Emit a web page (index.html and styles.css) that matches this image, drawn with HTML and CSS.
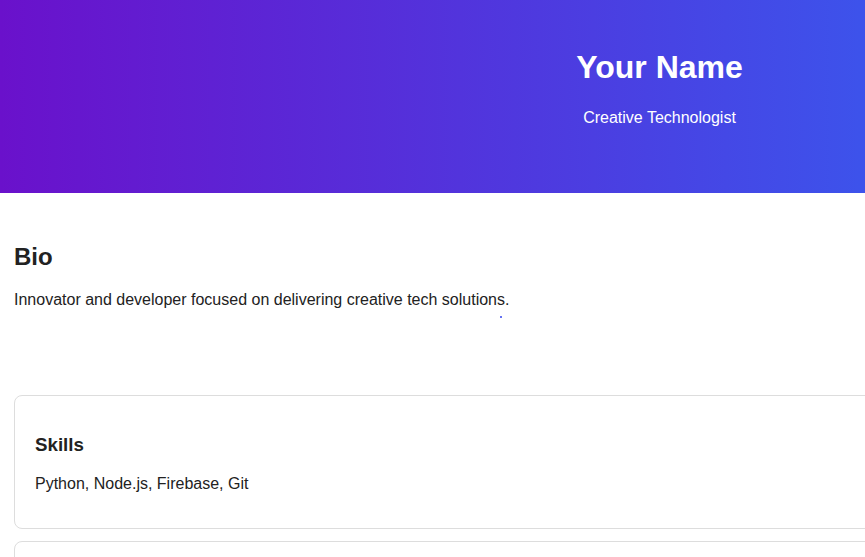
FILE: index.html
```html
<!DOCTYPE html>
<html lang="en">
<head>
<meta charset="utf-8">
<title>Your Name</title>
<link rel="stylesheet" href="styles.css">
</head>
<body>
<div class="page">
  <header class="hero">
    <h1>Your Name</h1>
    <p>Creative Technologist</p>
  </header>
  <main class="content">
    <section class="bio">
      <h2>Bio</h2>
      <p>Innovator and developer focused on delivering creative tech solutions.</p>
      <span class="dot"></span>
    </section>
    <section class="card">
      <h3>Skills</h3>
      <p>Python, Node.js, Firebase, Git</p>
    </section>
    <section class="card card-next"></section>
  </main>
</div>
</body>
</html>
```
FILE: styles.css
```css
html, body {
  margin: 0;
  overflow: hidden;
}
body {
  font-family: "Liberation Sans", Arial, sans-serif;
  color: #222;
  background: #fff;
}
.page {
  width: 1319px;
}
.hero {
  box-sizing: border-box;
  height: 193px;
  padding-top: 49px;
  background: linear-gradient(to right, #6a11cb, #2575fc);
  color: #fff;
  text-align: center;
}
.hero h1 {
  margin: 0;
  font-size: 32px;
  line-height: 37px;
}
.hero p {
  margin: 23px 0 0;
  font-size: 16px;
  line-height: 18px;
}
.content {
  padding: 30px 14px 0;
}
.bio {
  position: relative;
  display: flow-root;
  margin-bottom: 70px;
}
.bio h2 {
  font-size: 24px;
  margin: 20px 0;
  line-height: 28px;
}
.bio p {
  margin: 16px 0;
  font-size: 16px;
  line-height: 18px;
}
.dot {
  position: absolute;
  left: 486px;
  top: 93px;
  width: 2px;
  height: 2px;
  background: #3344ee;
  border-radius: 50%;
}
.card {
  border: 1px solid #ddd;
  border-radius: 8px;
  padding: 20px;
  margin-bottom: 12px;
}
.card-next {
  height: 120px;
}
.card h3 {
  font-size: 18.72px;
  line-height: 22px;
  margin: 18px 0 19px;
}
.card p {
  font-size: 16px;
  line-height: 18px;
  margin: 16px 0 15px;
}
```
